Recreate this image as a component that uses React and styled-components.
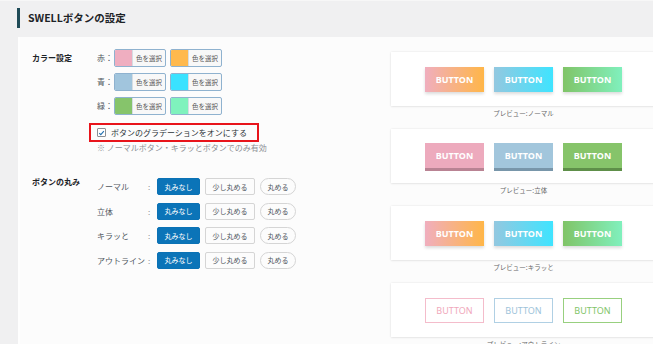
import React from 'react';
import styled, { createGlobalStyle, css } from 'styled-components';

const GlobalStyle = createGlobalStyle`
  html, body { margin: 0; padding: 0; background: #f0f0f1; }
  body { font-family: "Noto Sans CJK JP", "Noto Sans", sans-serif; overflow: hidden; }
  #root { width: 653px; height: 344px; overflow: hidden; }
  * { box-sizing: border-box; }
`;

const Page = styled.div`
  width: 653px;
  height: 344px;
  overflow: hidden;
  background: #f0f0f1;
  display: flex;
  flex-direction: column;
`;

const Header = styled.header`
  height: 37px;
  flex-shrink: 0;
  display: flex;
  align-items: flex-start;
  padding: 7px 0 0 17px;
  border-top: 1px solid #f7f7f7;
`;

const Title = styled.h1`
  margin: 0;
  height: 20px;
  border-left: 3px solid #1f4b57;
  padding-left: 8px;
  font-size: 10.5px;
  font-weight: 700;
  color: #1d2327;
  line-height: 19px;
`;

const Body = styled.main`
  flex: 1;
  display: flex;
  margin-left: 18px;
  background: #fcfcfc;
  border-left: 2px solid #fefefe;
`;

const Settings = styled.div`
  width: 371px;
  flex-shrink: 0;
  padding: 12px 0 0 12px;
`;

const Section = styled.section`
  display: grid;
  grid-template-columns: 65px 1fr;
  margin-top: ${p => p.$mt || 0}px;
`;

const SectionLabel = styled.div`
  font-size: 8px;
  font-weight: 700;
  color: #1d2327;
  line-height: ${p => p.$lh}px;
`;

const Controls = styled.div`
  display: flex;
  flex-direction: column;
`;

const ColorRows = styled.div`
  display: flex;
  flex-direction: column;
  gap: 6px;
`;

const ColorRow = styled.div`
  display: flex;
  align-items: center;
  height: 18px;
`;

const ColorName = styled.span`
  width: 17px;
  font-size: 8px;
  color: #50575e;
  line-height: 18px;
`;

const Picker = styled.button`
  width: 52px;
  height: 18px;
  padding: 0;
  margin-right: 4px;
  border: 1px solid #8fb2cf;
  border-radius: 2px;
  display: flex;
  background: #f8f8f8;
  overflow: hidden;
  font-family: inherit;
`;

const Swatch = styled.span`
  width: 17px;
  height: 100%;
  background: ${p => p.$c};
`;

const PickerText = styled.span`
  flex: 1;
  height: 100%;
  font-size: 6.5px;
  color: #555;
  display: flex;
  align-items: center;
  justify-content: center;
  border-left: 1px solid #d6dde3;
`;

const GradBox = styled.label`
  display: flex;
  align-items: center;
  gap: 5px;
  margin: 8px 0 0 -8px;
  width: 170px;
  height: 19px;
  border: 2px solid #e8141b;
  padding-left: 6px;
  font-size: 8px;
  color: #2c3338;
  white-space: nowrap;
`;

const CheckBox = styled.span`
  width: 9px;
  height: 9px;
  border: 1px solid #8c8f94;
  border-radius: 1px;
  background: #fff;
  display: flex;
  align-items: center;
  justify-content: center;
`;

const Note = styled.p`
  margin: 1px 0 0 0;
  font-size: 8px;
  line-height: 10px;
  color: #8c8f94;
  white-space: nowrap;
`;

const RoundRows = styled.div`
  display: flex;
  flex-direction: column;
  gap: 7.5px;
`;

const RoundRow = styled.div`
  display: flex;
  align-items: center;
  height: 17px;
`;

const RowLabel = styled.span`
  width: 49px;
  font-size: 8px;
  color: #50575e;
  white-space: nowrap;
`;

const Colon = styled.span`
  width: 11px;
  padding-left: 2px;
  font-size: 8px;
  color: #8c8f94;
`;

const Toggle = styled.button`
  height: 17px;
  width: ${p => p.$w}px;
  margin-right: 5px;
  padding: 0;
  font-family: inherit;
  font-size: 7px;
  border-radius: ${p => (p.$pill ? '9px' : '2px')};
  border: 1px solid #d5d5d5;
  background: #fcfcfc;
  color: #50575e;
  ${p =>
    p.$active &&
    css`
      border-color: #0b72b5;
      background: #0b74b8;
      color: #fff;
    `}
`;

const Previews = styled.div`
  width: 265px;
  flex-shrink: 0;
  padding-top: 15px;
  display: flex;
  flex-direction: column;
`;

const Panel = styled.div`
  height: 54px;
  background: #fff;
  box-shadow: 0 0 2px rgba(0, 0, 0, 0.1), 0 1px 2px rgba(0, 0, 0, 0.06);
  display: flex;
  align-items: center;
  justify-content: center;
  gap: 10px;
`;

const Caption = styled.div`
  height: 23px;
  font-size: 6.5px;
  line-height: 14px;
  color: #666;
  text-align: center;
`;

const PBtn = styled.span`
  width: 59px;
  height: 25px;
  display: flex;
  align-items: center;
  justify-content: center;
  font-family: "Noto Sans", "Liberation Sans", sans-serif;
  font-size: 9px;
  font-weight: 700;
  color: #fff;
  ${p =>
    p.$kind === 'grad' &&
    css`
      background: linear-gradient(to right, ${p.$c1}, ${p.$c2});
      box-shadow: 0 2px 3px rgba(0, 0, 0, 0.14);
    `}
  ${p =>
    p.$kind === 'solid' &&
    css`
      background: ${p.$c1};
      box-shadow: 0 3px 0 ${p.$c2};
      margin-bottom: 2px;
    `}
  ${p =>
    p.$kind === 'outline' &&
    css`
      height: 25px;
      background: #fff;
      border: 1px solid ${p.$c1};
      color: ${p.$c2};
      font-weight: 400;
    `}
`;

const colors = [
  { name: '赤', a: '#efaec0', b: '#ffb94d' },
  { name: '青', a: '#a1c5dd', b: '#3ae2ff' },
  { name: '緑', a: '#86c46b', b: '#7ff2bd' },
];

const gradBtns = [
  ['#f0aebe', '#ffb648'],
  ['#93c8e0', '#3fe4ff'],
  ['#80c467', '#80f0bd'],
];
const solidBtns = [
  ['#edaabd', '#b98393'],
  ['#a2c6dc', '#7896aa'],
  ['#86c46a', '#5e8f49'],
];
const outlineBtns = [
  ['#f4bccb', '#f0a8bb'],
  ['#b0d0e4', '#9ec3da'],
  ['#98d07f', '#82c469'],
];

const rounds = ['ノーマル', '立体', 'キラッと', 'アウトライン'];

const previews = [
  { kind: 'grad', list: gradBtns, caption: 'プレビュー:ノーマル' },
  { kind: 'solid', list: solidBtns, caption: 'プレビュー:立体' },
  { kind: 'grad', list: gradBtns, caption: 'プレビュー:キラッと' },
  { kind: 'outline', list: outlineBtns, caption: 'プレビュー:アウトライン' },
];

export default function App() {
  return (
    <Page>
      <GlobalStyle />
      <Header>
        <Title>SWELLボタンの設定</Title>
      </Header>
      <Body>
        <Settings>
          <Section>
            <SectionLabel $lh={18}>カラー設定</SectionLabel>
            <Controls>
              <ColorRows>
                {colors.map(c => (
                  <ColorRow key={c.name}>
                    <ColorName>{c.name}：</ColorName>
                    <Picker>
                      <Swatch $c={c.a} />
                      <PickerText>色を選択</PickerText>
                    </Picker>
                    <Picker>
                      <Swatch $c={c.b} />
                      <PickerText>色を選択</PickerText>
                    </Picker>
                  </ColorRow>
                ))}
              </ColorRows>
              <GradBox>
                <CheckBox>
                  <svg width="8" height="8" viewBox="0 0 10 10">
                    <path d="M1.8 5.2 L4 7.4 L8.4 2.4" fill="none" stroke="#2271b1" strokeWidth="1.6" />
                  </svg>
                </CheckBox>
                ボタンのグラデーションをオンにする
              </GradBox>
              <Note>※ ノーマルボタン・キラッとボタンでのみ有効</Note>
            </Controls>
          </Section>
          <Section $mt={25}>
            <SectionLabel $lh={8}>ボタンの丸み</SectionLabel>
            <RoundRows>
              {rounds.map(r => (
                <RoundRow key={r}>
                  <RowLabel>{r}</RowLabel>
                  <Colon>:</Colon>
                  <Toggle $w={43} $active>丸みなし</Toggle>
                  <Toggle $w={50}>少し丸める</Toggle>
                  <Toggle $w={36} $pill>丸める</Toggle>
                </RoundRow>
              ))}
            </RoundRows>
          </Section>
        </Settings>
        <Previews>
          {previews.map(p => (
            <React.Fragment key={p.caption}>
              <Panel>
                {p.list.map(([c1, c2], i) => (
                  <PBtn key={i} $kind={p.kind} $c1={c1} $c2={c2}>
                    BUTTON
                  </PBtn>
                ))}
              </Panel>
              <Caption>{p.caption}</Caption>
            </React.Fragment>
          ))}
        </Previews>
      </Body>
    </Page>
  );
}
